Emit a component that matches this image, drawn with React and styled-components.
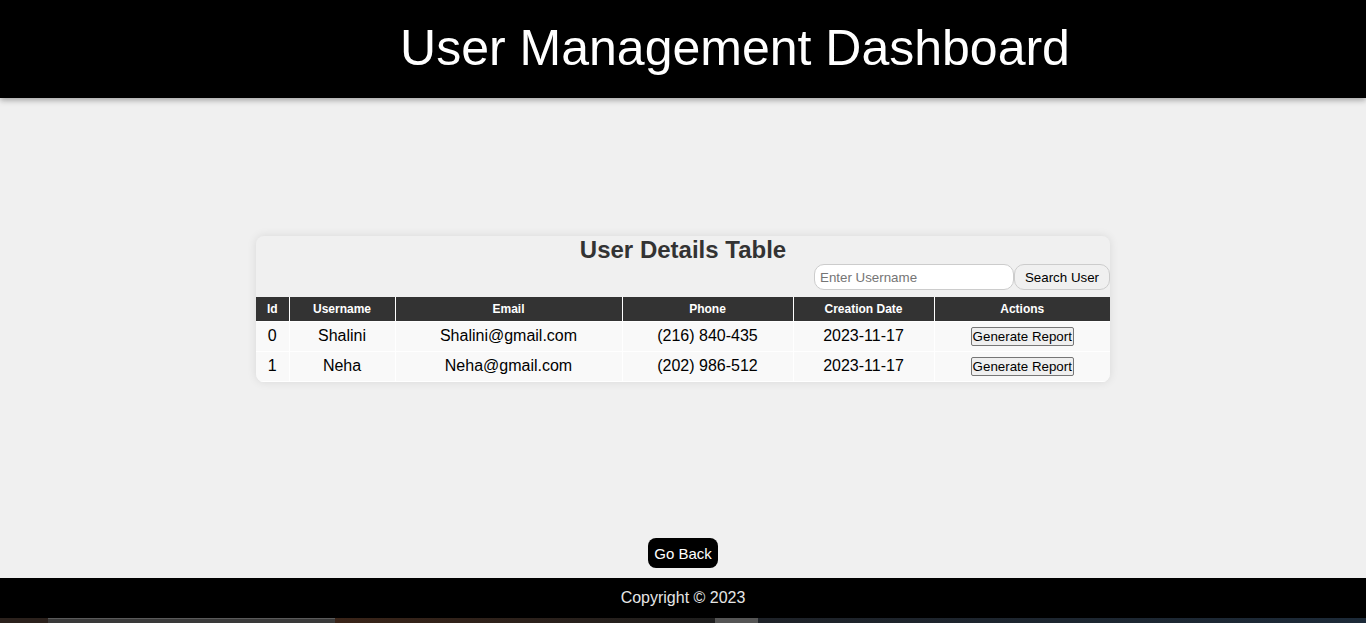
import React, { useState } from 'react';
import styled, { createGlobalStyle } from 'styled-components';

const GlobalStyle = createGlobalStyle`
  html, body {
    margin: 0;
    padding: 0;
    background: #f0f0f0;
    font-family: "Liberation Sans", Arial, sans-serif;
  }
`;

const Page = styled.div`
  min-height: 100vh;
  display: flex;
  flex-direction: column;
`;

const Header = styled.header`
  height: 98px;
  background: #000;
  box-shadow: 0 2px 6px rgba(0, 0, 0, 0.35);
  display: flex;
  align-items: center;
  justify-content: center;
  padding-left: 104px;
  position: relative;
  z-index: 2;
`;

const HeaderTitle = styled.h1`
  margin: 0;
  color: #fff;
  font-size: 50px;
  font-weight: 400;
  line-height: 1;
  padding-bottom: 2px;
`;

const Main = styled.main`
  flex: 1;
  display: flex;
  flex-direction: column;
  align-items: center;
  padding-top: 138px;
`;

const Card = styled.section`
  width: 854px;
  background: #f0f0f0;
  border-radius: 8px;
  box-shadow: 0 0 10px rgba(0, 0, 0, 0.1);
  overflow: hidden;
`;

const CardTitle = styled.h2`
  margin: 0;
  text-align: center;
  font-size: 24px;
  line-height: 27px;
  color: #333;
  font-weight: 700;
`;

const SearchRow = styled.div`
  display: flex;
  justify-content: flex-end;
  margin-top: 1px;
  margin-bottom: 7px;
`;

const SearchInput = styled.input`
  width: 200px;
  height: 26px;
  box-sizing: border-box;
  border: 1px solid #ccc;
  border-radius: 10px;
  padding: 0 5px;
  font-family: "Liberation Sans", Arial, sans-serif;
  font-size: 13.33px;
  background: #fff;
  outline: none;

  &::placeholder {
    color: #757575;
  }
`;

const SearchButton = styled.button`
  width: 96px;
  height: 26px;
  box-sizing: border-box;
  border: 1px solid #ccc;
  border-radius: 10px;
  background: #f0f0f0;
  color: #000;
  font-family: "Liberation Sans", Arial, sans-serif;
  font-size: 13.33px;
  padding: 0;
  cursor: pointer;
`;

const Table = styled.table`
  width: 100%;
  border-collapse: collapse;
  table-layout: fixed;
`;

const Th = styled.th`
  background: #333;
  color: #fff;
  font-size: 12px;
  font-weight: 700;
  height: 24px;
  padding: 0;
  border: 1px solid #fff;
  border-top: none;
  &:first-child { border-left: none; }
  &:last-child { border-right: none; }
`;

const Td = styled.td`
  background: #f9f9f9;
  color: #000;
  font-size: 16px;
  height: 28px;
  padding: 0 0 1px;
  text-align: center;
  border: 1px solid #fff;
  &:first-child { border-left: none; }
  &:last-child { border-right: none; }
`;

const ReportButton = styled.button`
  font-family: "Liberation Sans", Arial, sans-serif;
  font-size: 13.33px;
  padding: 1px 1px;
  height: 19px;
  line-height: 15px;
  border: 1px solid #767676;
  border-radius: 2px;
  background: #efefef;
  color: #000;
  cursor: pointer;
`;

const GoBack = styled.button`
  margin-top: auto;
  margin-bottom: 10px;
  background: #000;
  color: #fff;
  border: none;
  border-radius: 8px;
  height: 30px;
  padding: 0 6px;
  font-family: "Liberation Sans", Arial, sans-serif;
  font-size: 15px;
  cursor: pointer;
`;

const Footer = styled.footer`
  height: 40px;
  background: #000;
  color: #e6e6e6;
  font-size: 16px;
  display: flex;
  align-items: center;
  justify-content: center;
`;

const Strip = styled.div`
  height: 5px;
  display: flex;
`;

const StripPart = styled.div`
  width: ${({ $w }) => $w}px;
  flex: ${({ $grow }) => ($grow ? 1 : 'none')};
  background: ${({ $bg }) => $bg};
  border-top: ${({ $edge }) => ($edge ? '1px solid #5a5a5a' : 'none')};
  box-sizing: border-box;
`;

const columns = [
  { label: 'Id', width: 33 },
  { label: 'Username', width: 106 },
  { label: 'Email', width: 227 },
  { label: 'Phone', width: 171 },
  { label: 'Creation Date', width: 141 },
  { label: 'Actions', width: 176 },
];

const users = [
  { id: 0, username: 'Shalini', email: 'Shalini@gmail.com', phone: '(216) 840-435', created: '2023-11-17' },
  { id: 1, username: 'Neha', email: 'Neha@gmail.com', phone: '(202) 986-512', created: '2023-11-17' },
];

export default function App() {
  const [query, setQuery] = useState('');

  return (
    <Page>
      <GlobalStyle />
      <Header>
        <HeaderTitle>User Management Dashboard</HeaderTitle>
      </Header>

      <Main>
        <Card>
          <CardTitle>User Details Table</CardTitle>
          <SearchRow>
            <SearchInput
              placeholder="Enter Username"
              value={query}
              onChange={(e) => setQuery(e.target.value)}
            />
            <SearchButton>Search User</SearchButton>
          </SearchRow>
          <Table>
            <colgroup>
              {columns.map((c) => (
                <col key={c.label} style={{ width: c.width }} />
              ))}
            </colgroup>
            <thead>
              <tr>
                {columns.map((c) => (
                  <Th key={c.label}>{c.label}</Th>
                ))}
              </tr>
            </thead>
            <tbody>
              {users.map((u) => (
                <tr key={u.id}>
                  <Td>{u.id}</Td>
                  <Td>{u.username}</Td>
                  <Td>{u.email}</Td>
                  <Td>{u.phone}</Td>
                  <Td>{u.created}</Td>
                  <Td>
                    <ReportButton>Generate Report</ReportButton>
                  </Td>
                </tr>
              ))}
            </tbody>
          </Table>
        </Card>
        <GoBack>Go Back</GoBack>
      </Main>

      <Footer>Copyright © 2023</Footer>
      <Strip>
        <StripPart $w={48} $bg="#2b211c" />
        <StripPart $w={287} $bg="#3a3a3a" $edge />
        <StripPart $w={380} $bg="linear-gradient(90deg, #3a2418, #1e1e1e)" />
        <StripPart $w={43} $bg="#555" />
        <StripPart $grow $bg="linear-gradient(90deg, #1e2228, #1c2a38)" />
      </Strip>
    </Page>
  );
}
